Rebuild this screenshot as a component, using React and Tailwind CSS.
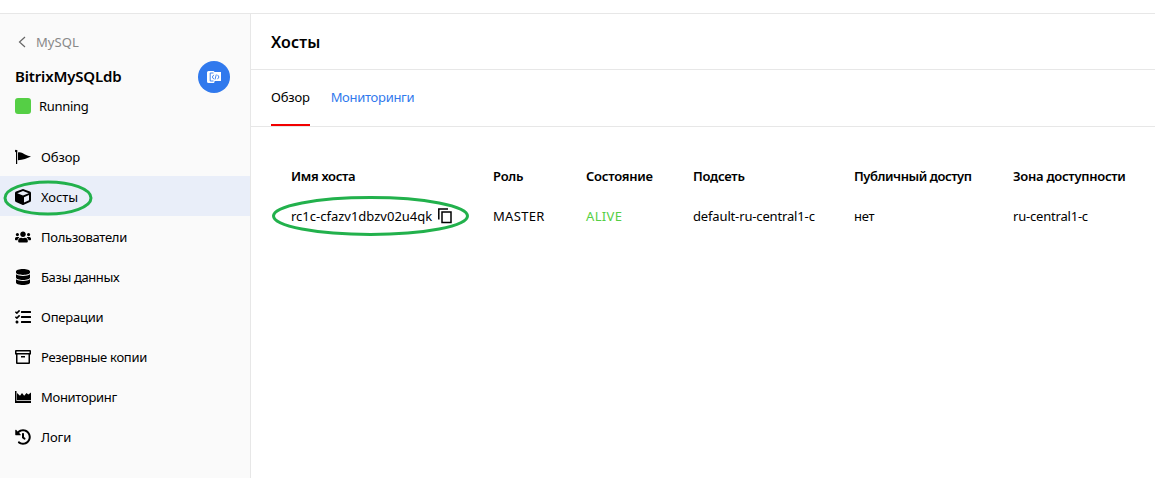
import React from "react";
import { FaUsers, FaTasks, FaHistory } from "react-icons/fa";

const nav = [
  { label: "Обзор", icon: "flag", spacing: "tracking-[-0.1px]" },
  { label: "Хосты", icon: "cube", active: true, spacing: "tracking-[-0.05px]" },
  { label: "Пользователи", icon: "users", spacing: "tracking-[-0.27px]" },
  { label: "Базы данных", icon: "database", spacing: "tracking-[-0.38px]" },
  { label: "Операции", icon: "tasks", spacing: "tracking-[-0.22px]" },
  { label: "Резервные копии", icon: "archive", spacing: "tracking-[-0.3px]" },
  { label: "Мониторинг", icon: "chart", spacing: "tracking-[-0.3px]" },
  { label: "Логи", icon: "history", spacing: "tracking-[-0.1px]" },
];

function NavIcon({ name }) {
  if (name === "users") return <FaUsers className="size-4" />;
  if (name === "tasks") return <FaTasks className="size-4" />;
  if (name === "history") return <FaHistory className="size-4" />;
  return (
    <svg viewBox="0 0 16 16" className="size-4" fill="currentColor">
      {name === "flag" && <path d="M0 2.2a1.2 1.2 0 1 1 2.2.5V15H1V3.3A1.2 1.2 0 0 1 0 2.2zM3 3.4C6 2.7 8 4.5 10 5.6c2 1 4 1.6 6 2C12 9.5 8 11 3 11.2z" />}
      {name === "cube" && <path fillRule="evenodd" d="M7.3.2a2 2 0 0 1 1.4 0l6.2 2.4A1.7 1.7 0 0 1 16 4.100v7.500a1.700 1.700 0 0 1-1 1.500l-6.200 2.700a2 2 0 0 1-1.600 0L1 13.100a1.700 1.700 0 0 1-1-1.500V4.100a1.700 1.700 0 0 1 1.100-1.500zM8 2 2.300 4.200 8 6.500l5.700-2.300zM9 8.200v5.300l5-2.200V6.100z" />}
      {name === "database" && (
        <path d="M1 2.6C1 1 4 0 8 0s7 1 7 2.600v1C15 5 12 6 8 6S1 5 1 3.600zM1 5.300C2.500 6.500 5 7 8 7s5.500-.5 7-1.700v3.200C15 10 12 11 8 11s-7-1-7-2.500zM1 10.300C2.500 11.500 5 12 8 12s5.500-.5 7-1.700v3.200c0 1.500-3 2.500-7 2.500s-7-1-7-2.500z" />
      )}
      {name === "archive" && <path fillRule="evenodd" d="M1 1h14a1 1 0 0 1 1 1v3.500h-1V14a1 1 0 0 1-1 1H2a1 1 0 0 1-1-1V5.500H0V2a1 1 0 0 1 1-1zM1.500 2.500V4h13V2.500zM2.500 5.500v8h11v-8zM6 7h4v1.500H6z" />}
      {name === "chart" && <path d="M0 2h1.500v10H16v2H0zM2 11.300V4l3 2.800L7 4l2.200 2.700L11.500 4l1.800 1.600L16 3.500v7.800z" />}
    </svg>
  );
}

const columns = [
  { head: "Роль", value: "MASTER", hs: "tracking-[-0.25px]", vs: "tracking-[0.33px]" },
  { head: "Состояние", value: "ALIVE", color: "text-[#55cf45]", hs: "tracking-[-0.25px]", vs: "tracking-[0.35px]" },
  { head: "Подсеть", value: "default-ru-central1-c", hs: "tracking-[-0.25px]", vs: "tracking-[-0.15px]" },
  { head: "Публичный доступ", value: "нет", hs: "tracking-[-0.44px]", vs: "tracking-[-0.2px]" },
  { head: "Зона доступности", value: "ru-central1-c", hs: "tracking-[-0.28px]", vs: "tracking-[-0.2px]" },
];

export default function App() {
  return (
    <div className="flex h-[478px] w-[1155px] flex-col overflow-hidden bg-white pt-[13px] font-['Noto_Sans',sans-serif] text-[13px] leading-5 text-black">
      <div className="flex flex-1 border-t border-[#e7e7e7]">
        <aside className="flex w-[251px] shrink-0 flex-col border-r border-[#e7e7e7] bg-[#fafafa]">
          <div className="mt-[18px] flex h-5 items-center pl-[18px] text-[#888]">
            <svg viewBox="0 0 8 12" className="mr-[10px] h-3 w-2" fill="none" stroke="#666" strokeWidth="1.2">
              <path d="m7 1-5.500 5L7 11" />
            </svg>
            <span className="tracking-[0.05px]">MySQL</span>
          </div>
          <div className="mt-[9px] flex h-8 items-center justify-between pr-5 pl-[15px]">
            <span className="pb-[2px] text-[15px] font-semibold tracking-[-0.16px]">BitrixMySQLdb</span>
            <span className="flex size-8 items-center justify-center rounded-full bg-[#3079ed] text-white">
              <svg viewBox="0 0 14 12" className="h-3 w-[14px]" fill="none">
                <path d="M1.500 0H6a1.500 1.500 0 0 1 1.500 1H14v9H7.500A1.500 1.500 0 0 1 6 12H1.500A1.500 1.500 0 0 1 0 10.500v-9A1.500 1.500 0 0 1 1.500 0z" fill="currentColor" />
                <path d="M6.500 2H3.200v8h3.300M6.800 3.800 5.300 6l1.500 2.200M9.300 3.500 8 8.500M10.500 3.800 12 6l-1.500 2.200" stroke="#3079ed" strokeWidth="0.9" />
              </svg>
            </span>
          </div>
          <div className="mt-[3px] flex h-5 items-center gap-2 pl-[15px]">
            <i className="size-4 rounded-[3px] bg-[#55cf45]" />
            <span className="tracking-[-0.3px]">Running</span>
          </div>
          <nav className="mt-5">
            {nav.map((n) => (
              <div key={n.label} className={"relative flex h-10 items-center gap-[10px] pt-[2px] pl-[15px] " + (n.active ? "bg-[#e9eef9]" : "")}>
                <NavIcon name={n.icon} />
                <span className={n.spacing}>{n.label}</span>
                {n.active && (
                  <svg className="absolute top-[4px] left-[3px] h-[36px] w-[90px]" viewBox="0 0 90 36" fill="none" stroke="#22b14c" strokeWidth="3">
                    <ellipse cx="45" cy="18" rx="43" ry="16" />
                  </svg>
                )}
              </div>
            ))}
          </nav>
        </aside>
        <main className="flex-1">
          <h1 className="flex h-[56px] items-center border-b border-[#e7e7e7] pl-5 text-[16px] font-semibold tracking-[0.15px]">Хосты</h1>
          <div className="flex h-[57px] gap-[21px] border-b border-[#e7e7e7] pl-5">
            <span className="flex items-center border-b-2 border-[#f20000] tracking-[-0.2px]">Обзор</span>
            <span className="flex items-center pb-[2px] tracking-[-0.3px] text-[#3079ed]">Мониторинги</span>
          </div>
          <div className="mt-[29px] grid grid-cols-[202px_93px_107px_161px_159px_142px] pl-10">
            <div>
              <div className="flex h-10 items-center font-semibold tracking-[-0.33px]">Имя хоста</div>
              <div className="relative flex h-10 items-center">
                rc1c-cfazv1dbzv02u4qk
                <svg className="ml-[6px] h-4 w-[14px]" viewBox="0 0 14 16" fill="none" stroke="currentColor" strokeWidth="1.500">
                  <path d="M4 4h9v10.500H4zM.8 11.500V1H10" />
                </svg>
                <svg className="absolute top-0 left-[-20px] h-10 w-[198px]" viewBox="0 0 198 40" fill="none" stroke="#22b14c" strokeWidth="3">
                  <ellipse cx="99.500" cy="20" rx="97" ry="18.500" />
                </svg>
              </div>
            </div>
            {columns.map((c) => (
              <div key={c.head} className="whitespace-nowrap">
                <div className={"flex h-10 items-center font-semibold " + c.hs}>{c.head}</div>
                <div className={"flex h-10 items-center " + c.vs + " " + (c.color || "")}>{c.value}</div>
              </div>
            ))}
          </div>
        </main>
      </div>
    </div>
  );
}
